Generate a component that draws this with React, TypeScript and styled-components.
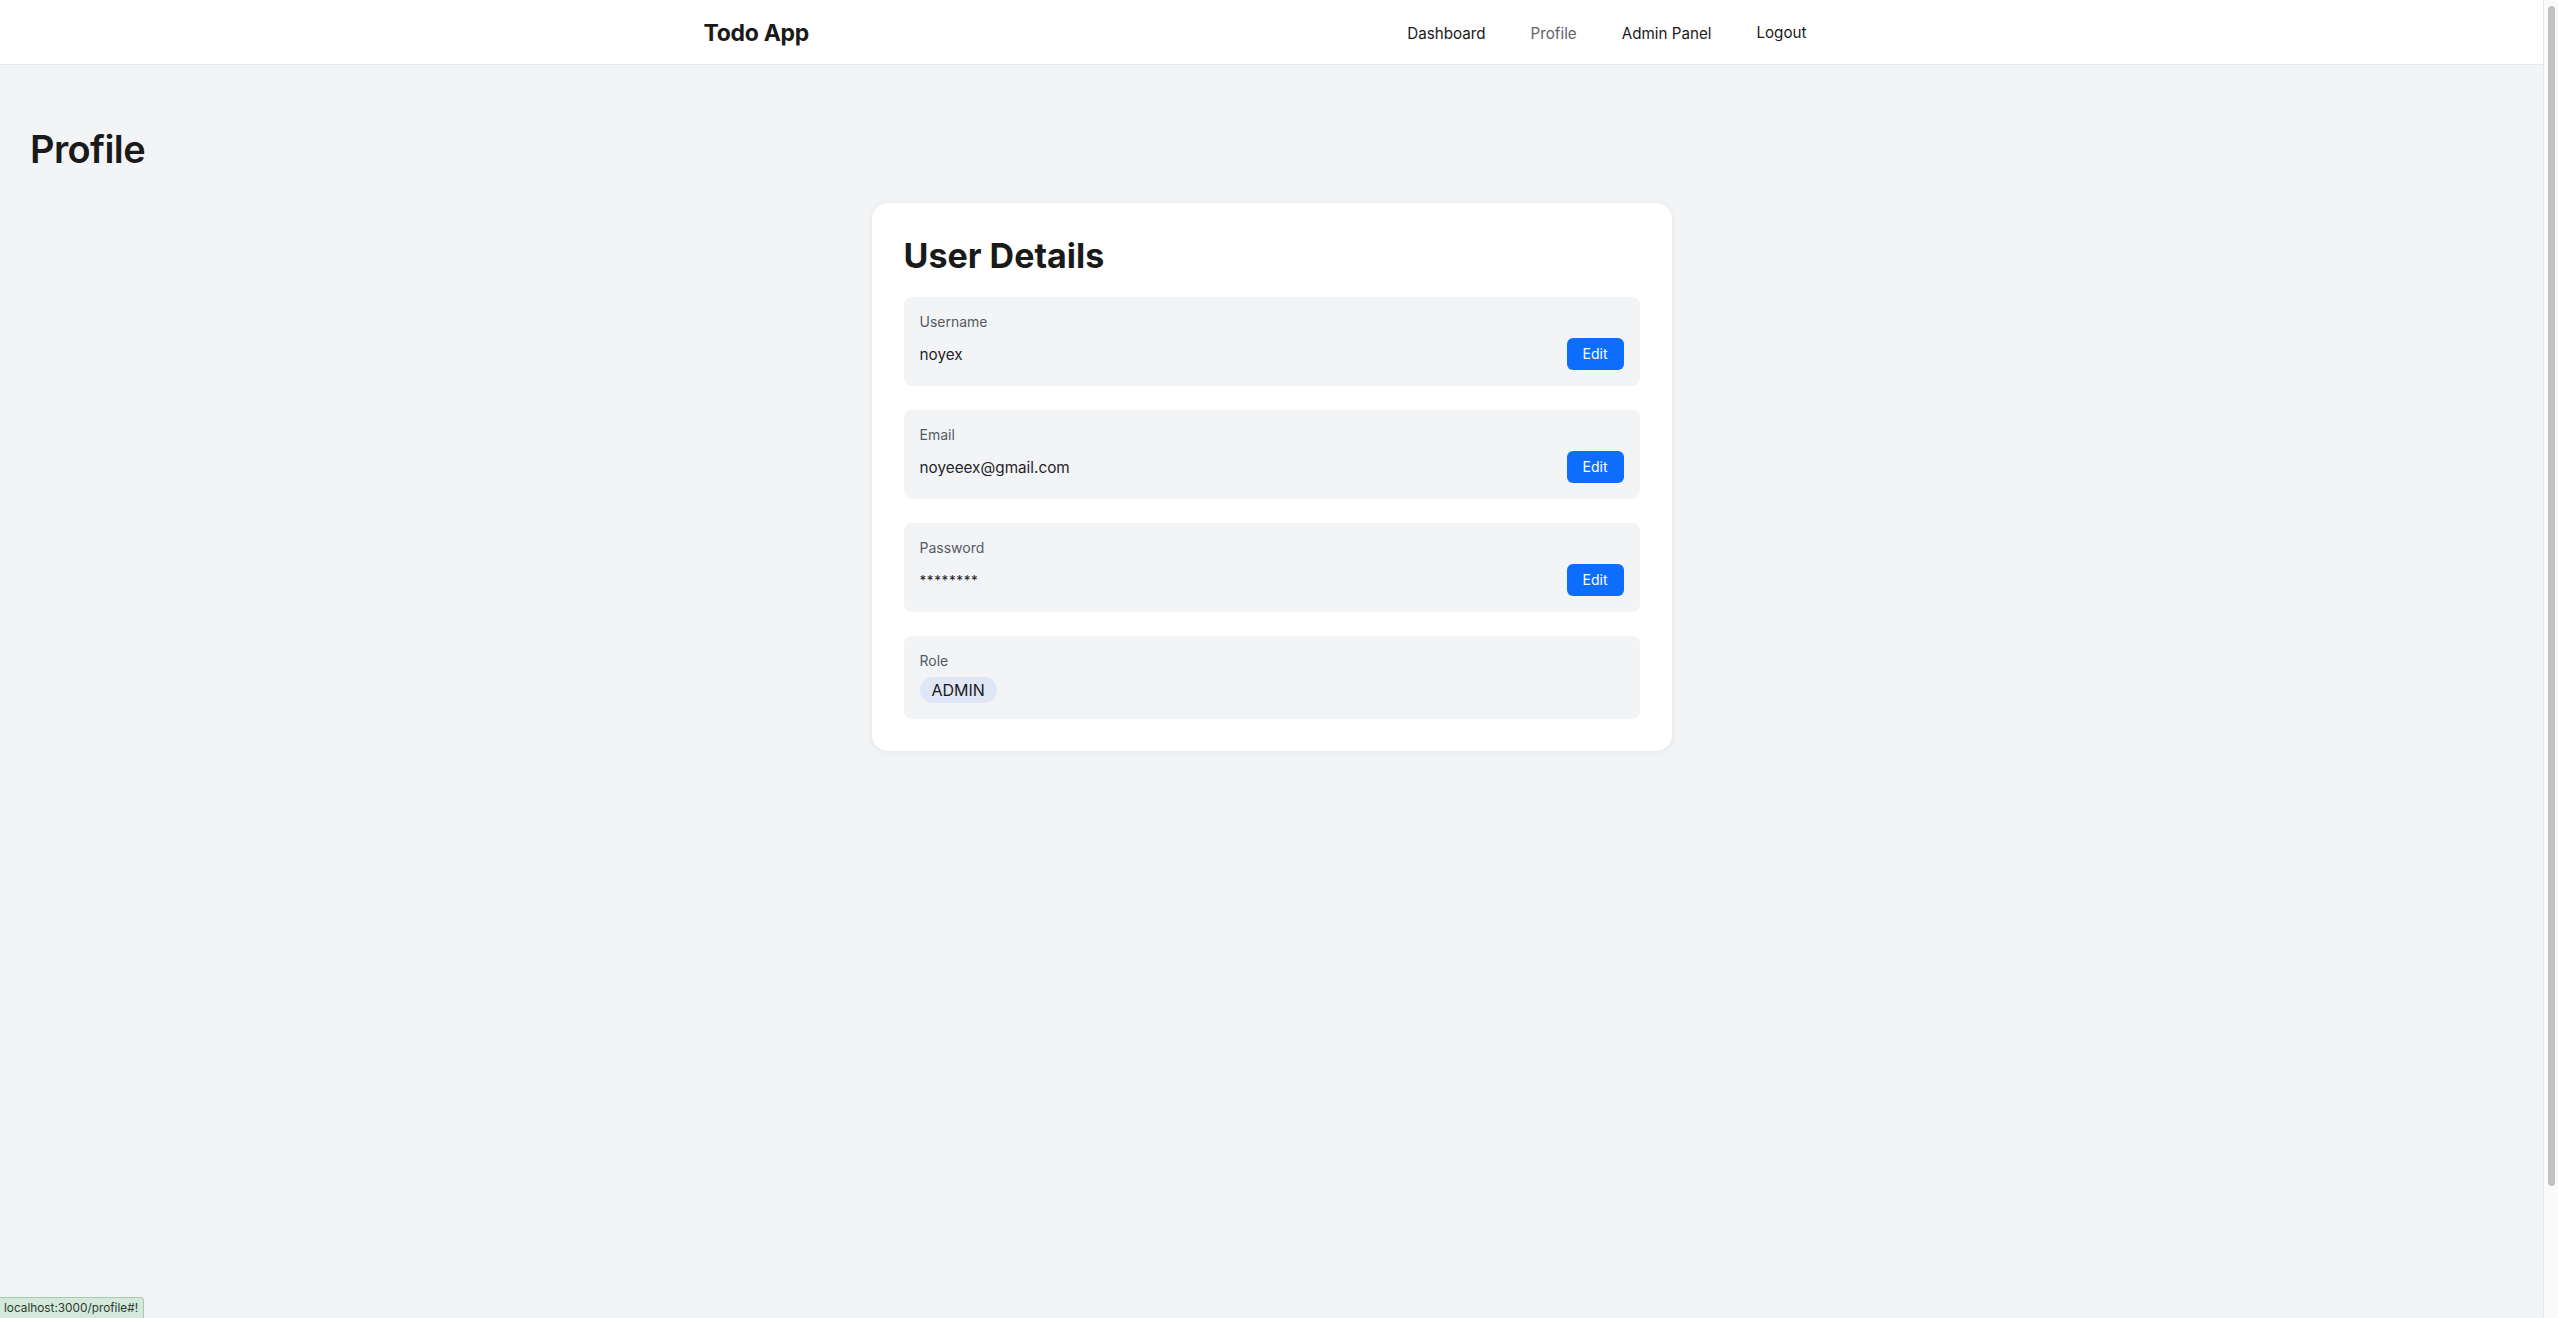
import React from 'react';
import styled, { createGlobalStyle } from 'styled-components';

const GlobalStyle = createGlobalStyle`
	* {
		box-sizing: border-box;
	}

	body {
		margin: 0;
		padding-right: 15px;
		background: #f3f4f6;
		color: #1a1a1a;
		font-family: Inter, 'Noto Sans', sans-serif;
	}
`;

const NavBar = styled.nav`
	height: 65px;
	background: #fff;
	border-bottom: 1px solid #e5e7eb;
`;

const NavInner = styled.div`
	max-width: 1200px;
	height: 100%;
	margin: 0 auto;
	padding: 2px 2rem 0;
	display: flex;
	align-items: center;
	justify-content: space-between;
`;

const Brand = styled.a`
	font-size: 23px;
	font-weight: 700;
	letter-spacing: -0.3px;
	color: #1a1a1a;
	text-decoration: none;
`;

const NavLinks = styled.div`
	display: flex;
	align-items: center;
	gap: 45px;
	padding-right: 33px;
`;

const NavLink = styled.a<{ $active?: boolean }>`
	font-size: 15.2px;
	color: ${(p) => (p.$active ? '#5f6368' : '#1a1a1a')};
	text-decoration: none;
`;

const LogoutButton = styled.button`
	border: none;
	background: none;
	padding: 0;
	margin-bottom: 2px;
	font-family: inherit;
	font-size: 15.2px;
	color: #1a1a1a;
	cursor: pointer;
`;

const Main = styled.main`
	min-height: 100vh;
	padding: 2rem;
	box-sizing: content-box;
`;

const PageTitle = styled.h1`
	margin: 29px 0 31px -2px;
	font-size: 38px;
	font-weight: 600;
	letter-spacing: -0.6px;
	color: #1a1a1a;
`;

const Card = styled.section`
	max-width: 800px;
	margin: 0 auto;
	padding: 2rem;
	background: #fff;
	border-radius: 16px;
	box-shadow: 0 1px 6px rgba(0, 0, 0, 0.07);
`;

const CardTitle = styled.h2`
	margin: 0 0 21px;
	font-size: 34px;
	font-weight: 700;
	color: #1a1a1a;
`;

const FieldList = styled.div`
	display: flex;
	flex-direction: column;
	gap: 24px;
`;

const Field = styled.div`
	padding: 16px;
	background: #f3f4f6;
	border-radius: 8px;
`;

const FieldLabel = styled.div`
	margin-bottom: 8px;
	font-size: 14px;
	line-height: 17px;
	color: #555a61;
`;

const FieldLine = styled.div`
	display: flex;
	align-items: center;
	justify-content: space-between;
`;

const FieldValue = styled.span<{ $secret?: boolean }>`
	font-size: ${(p) => (p.$secret ? '13.5px' : '15.3px')};
	letter-spacing: ${(p) => (p.$secret ? '0.6px' : '0')};
	color: #1f2328;
`;

const EditButton = styled.button`
	padding: 8px 16px;
	border: none;
	border-radius: 6px;
	background: #0d6efd;
	color: #fff;
	font-family: inherit;
	font-size: 14px;
	line-height: 16px;
	cursor: pointer;
`;

const RoleBadge = styled.span`
	display: inline-block;
	padding: 4px 12px;
	border-radius: 999px;
	background: #dfe6f6;
	font-size: 16px;
	line-height: 18px;
	color: #1a1a1a;
`;

const StatusBar = styled.div`
	position: fixed;
	left: 0;
	bottom: 0;
	padding: 3px 5px 2px 4px;
	background: #d3e9d9;
	border: 1px solid #a9c8b1;
	border-left: none;
	border-bottom: none;
	border-top-right-radius: 4px;
	font-size: 11.8px;
	line-height: 15px;
	color: #2d3a30;
`;

const ScrollTrack = styled.div`
	position: fixed;
	top: 0;
	right: 0;
	bottom: 0;
	width: 15px;
	padding: 6px 3px 0 4px;
	background: #fafafa;
	border-left: 1px solid #e8e8e8;
`;

const ScrollThumb = styled.div`
	height: 1180px;
	border-radius: 4px;
	background: #c1c1c1;
`;

const fields = [
	{ label: 'Username', value: 'noyex' },
	{ label: 'Email', value: 'noyeeex@gmail.com' },
	{ label: 'Password', value: '********', secret: true },
];

const App = () => {
	return (
		<>
			<GlobalStyle />
			<NavBar>
				<NavInner>
					<Brand href="#!">Todo App</Brand>
					<NavLinks>
						<NavLink href="#!">Dashboard</NavLink>
						<NavLink href="#!" $active>
							Profile
						</NavLink>
						<NavLink href="#!">Admin Panel</NavLink>
						<LogoutButton>Logout</LogoutButton>
					</NavLinks>
				</NavInner>
			</NavBar>
			<Main>
				<PageTitle>Profile</PageTitle>
				<Card>
					<CardTitle>User Details</CardTitle>
					<FieldList>
						{fields.map((f) => (
							<Field key={f.label}>
								<FieldLabel>{f.label}</FieldLabel>
								<FieldLine>
									<FieldValue $secret={f.secret}>{f.value}</FieldValue>
									<EditButton>Edit</EditButton>
								</FieldLine>
							</Field>
						))}
						<Field>
							<FieldLabel>Role</FieldLabel>
							<RoleBadge>ADMIN</RoleBadge>
						</Field>
					</FieldList>
				</Card>
			</Main>
			<StatusBar>localhost:3000/profile#!</StatusBar>
			<ScrollTrack>
				<ScrollThumb />
			</ScrollTrack>
		</>
	);
};

export default App;
